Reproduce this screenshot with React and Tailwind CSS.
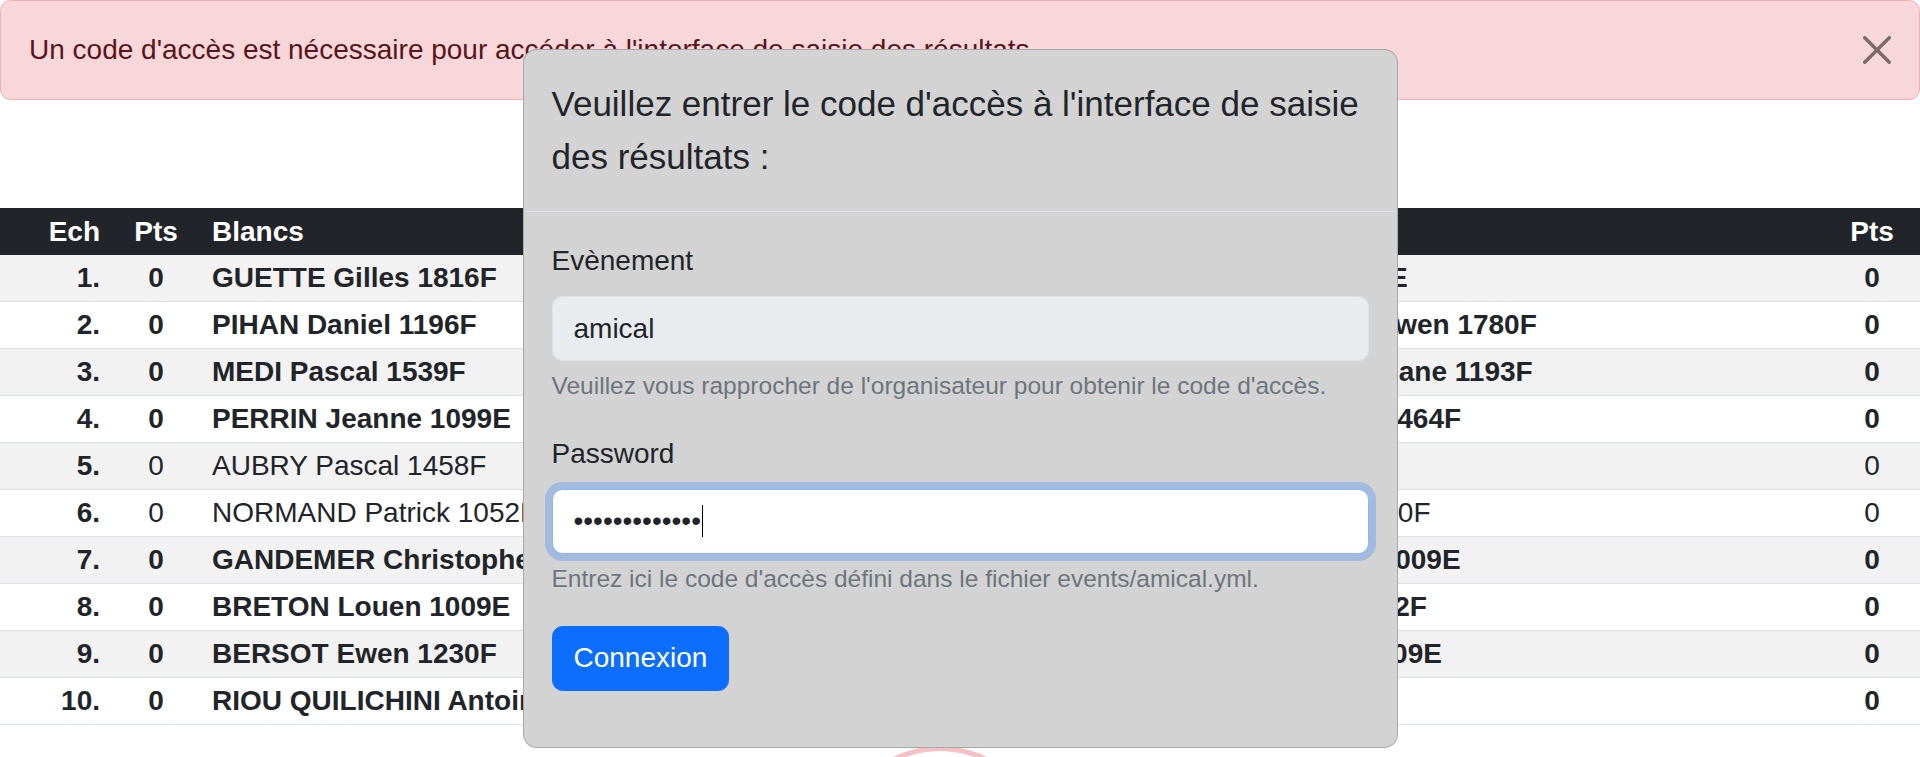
import React from 'react'

const joueurs = [
  { n: 1, bold: true, blanc: 'GUETTE Gilles 1816F', noir: 'PY Lou 1234E' },
  { n: 2, bold: true, blanc: 'PIHAN Daniel 1196F', noir: 'KERBRAT Erwen 1780F' },
  { n: 3, bold: true, blanc: 'MEDI Pascal 1539F', noir: 'LEMOINE Oriane 1193F' },
  { n: 4, bold: true, blanc: 'PERRIN Jeanne 1099E', noir: 'MARTIN Eli 1464F' },
  { n: 5, bold: false, blanc: 'AUBRY Pascal 1458F', noir: 'HO Li 1205F' },
  { n: 6, bold: false, blanc: 'NORMAND Patrick 1052F', noir: 'ROY Eliot 1190F' },
  { n: 7, bold: true, blanc: 'GANDEMER Christophe 1512F', noir: 'GALL Léna 1009E' },
  { n: 8, bold: true, blanc: 'BRETON Louen 1009E', noir: 'LY Nolan 1152F' },
  { n: 9, bold: true, blanc: 'BERSOT Ewen 1230F', noir: 'PAN Liam 1209E' },
  { n: 10, bold: true, blanc: 'RIOU QUILICHINI Antoine 1388F', noir: 'NG Ly 1100F' },
]

const cols = 'grid grid-cols-[114px_84px_852px_159px_615px_96px]'

function CloseIcon() {
  return (
    <svg width="28" height="28" viewBox="0 0 16 16" className="opacity-50">
      <path
        fill="#000"
        d="M.293.293a1 1 0 0 1 1.414 0L8 6.586 14.293.293a1 1 0 1 1 1.414 1.414L9.414 8l6.293 6.293a1 1 0 0 1-1.414 1.414L8 9.414l-6.293 6.293a1 1 0 0 1-1.414-1.414L6.586 8 .293 1.707a1 1 0 0 1 0-1.414z"
      />
    </svg>
  )
}

export default function App() {
  return (
    <div className="relative h-screen overflow-hidden bg-white font-['Liberation_Sans',Arial,sans-serif] text-[#212529]">
      {/* Alerte */}
      <div className="relative mb-[108px] rounded-[10.5px] border border-[#f1aeb5] bg-[#f8d7da] p-[28px] pr-[84px] text-[28px] leading-[42px] text-[#58151c]">
        Un code d'accès est nécessaire pour accéder à l'interface de saisie des résultats.
        <button className="absolute right-0 top-0 px-[28px] py-[35px]">
          <CloseIcon />
        </button>
      </div>

      {/* Tableau des appariements */}
      <div className="text-[28px]">
        <div className={`${cols} h-[47px] items-center bg-[#212529] font-bold text-white`}>
          <div className="pr-[14px] text-right">Ech</div>
          <div className="text-center">Pts</div>
          <div className="pl-[14px]">Blancs</div>
          <div className="text-center">Rés.</div>
          <div className="pl-[14px]">Noirs</div>
          <div className="text-center">Pts</div>
        </div>
        {joueurs.map((j, i) => (
          <div
            key={j.n}
            className={`${cols} h-[47px] items-center border-b border-[#dee2e6] ${i % 2 === 0 ? 'bg-[#f2f2f2]' : 'bg-white'}`}
          >
            <div className="pr-[14px] text-right font-bold">{j.n}.</div>
            <div className={`text-center ${j.bold ? 'font-bold' : ''}`}>0</div>
            <div className={`whitespace-nowrap pl-[14px] ${j.bold ? 'font-bold' : ''}`}>{j.blanc}</div>
            <div className="text-center"></div>
            <div className={`whitespace-nowrap pl-[14px] ${j.bold ? 'font-bold' : ''}`}>{j.noir}</div>
            <div className={`text-center ${j.bold ? 'font-bold' : ''}`}>0</div>
          </div>
        ))}
      </div>

      {/* cercle rouge derrière la modale */}
      <div className="absolute left-[835px] top-[746px] h-[210px] w-[210px] rounded-full border-[5px] border-[#f5c2c7]"></div>

      {/* Modale */}
      <div className="absolute inset-0 flex items-start justify-center pt-[49px]">
        <div className="w-[875px] rounded-[14px] border border-black/20 bg-[#d3d3d3]">
          <div className="border-b border-[#dee2e6] p-[28px]">
            <h5 className="text-[35px] leading-[52.5px]">
              Veuillez entrer le code d'accès à l'interface de saisie des résultats :
            </h5>
          </div>
          <div className="p-[28px] text-[28px] leading-[42px]">
            <div className="mb-[28px]">
              <label className="mb-[14px] block">Evènement</label>
              <div className="h-[65px] rounded-[10.5px] border border-[#dee2e6] bg-[#e9ecef] px-[21px] py-[10.5px]">
                amical
              </div>
              <div className="mt-[7px] text-[24.5px] leading-[36.75px] text-[#6c757d]">
                Veuillez vous rapprocher de l'organisateur pour obtenir le code d'accès.
              </div>
            </div>
            <div className="mb-[28px]">
              <label className="mb-[14px] block">Password</label>
              <div className="flex h-[65px] items-center rounded-[10.5px] border border-[#86b7fe] bg-white px-[21px] shadow-[0_0_0_7px_rgba(13,110,253,0.25)]">
                <span>•••••••••••••</span>
                <span className="ml-[1px] inline-block h-[32px] w-px bg-black"></span>
              </div>
              <div className="mt-[7px] text-[24.5px] leading-[36.75px] text-[#6c757d]">
                Entrez ici le code d'accès défini dans le fichier events/amical.yml.
              </div>
            </div>
            <div className="mb-[28px]">
              <button className="h-[65px] rounded-[10.5px] border border-[#0d6efd] bg-[#0d6efd] px-[21px] text-white">
                Connexion
              </button>
            </div>
          </div>
        </div>
      </div>
    </div>
  )
}
